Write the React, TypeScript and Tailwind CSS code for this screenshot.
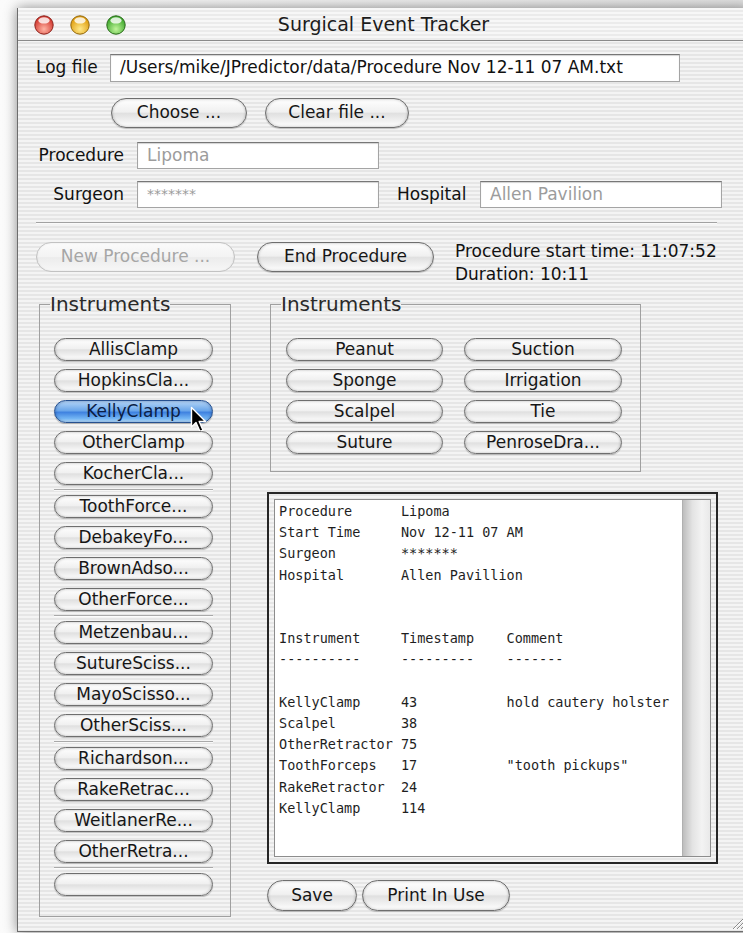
import React from 'react';

type Tone = 'normal' | 'active' | 'disabled';

const sans = "font-['DejaVu_Sans','Liberation_Sans',sans-serif]";
const mono = "font-['DejaVu_Sans_Mono','Liberation_Mono',monospace]";
const stripes =
  'bg-[image:repeating-linear-gradient(to_bottom,#f4f4f4_0px,#f4f4f4_2px,#e6e6e6_2px,#e6e6e6_4px)]';

const skins: Record<Tone, string> = {
  normal:
    'border-[#6e6e6e] text-[#161616] bg-[linear-gradient(to_bottom,#ffffff_0%,#f0f0f0_46%,#e0e0e0_52%,#f2f2f2_80%,#ffffff_100%)] shadow-[inset_0_0_3px_rgba(0,0,0,0.3),0_1px_1px_rgba(0,0,0,0.22)]',
  active:
    'border-[#26508f] text-[#0b1d45] bg-[linear-gradient(to_bottom,#b5d6f7_0%,#6aa6ea_46%,#3f82e0_54%,#74b6f4_84%,#bfe4ff_100%)] shadow-[inset_0_0_3px_rgba(0,30,90,0.45),0_1px_1px_rgba(0,0,0,0.25)]',
  disabled:
    'border-[#c2c2c2] text-[#a6a6a6] bg-[linear-gradient(to_bottom,#fbfbfb_0%,#f3f3f3_50%,#ececec_52%,#f7f7f7_100%)] shadow-[inset_0_0_2px_rgba(0,0,0,0.1)]',
};

function Pill({ label, tone = 'normal', className = '' }: { label: string; tone?: Tone; className?: string }) {
  return (
    <button
      type="button"
      className={`flex items-center justify-center rounded-full border whitespace-nowrap ${skins[tone]} ${className}`}
    >
      {label}
    </button>
  );
}

function Light({ id, base, glow, rim }: { id: string; base: string; glow: string; rim: string }) {
  return (
    <svg width="20" height="20" viewBox="0 0 20 20">
      <defs>
        <radialGradient id={id} cx="50%" cy="72%" r="62%">
          <stop offset="0%" stopColor={glow} />
          <stop offset="100%" stopColor={base} />
        </radialGradient>
      </defs>
      <circle cx="10" cy="10" r="9.2" fill={`url(#${id})`} stroke={rim} strokeWidth="1" />
      <ellipse cx="10" cy="5.4" rx="5.6" ry="3.2" fill="#ffffff" opacity="0.8" />
    </svg>
  );
}

function Field({ value, muted = false, className = '' }: { value: string; muted?: boolean; className?: string }) {
  return (
    <div
      className={`flex items-center bg-white border border-[#a4a4a4] border-t-[#777777] pl-[9px] shadow-[inset_0_1px_1px_rgba(0,0,0,0.18)] whitespace-nowrap overflow-hidden ${
        muted ? 'text-[#9c9c9c]' : 'text-[#111111]'
      } ${className}`}
    >
      {value}
    </div>
  );
}

function Groove() {
  return <div className="my-[4px] h-[2px] border-t border-[#a9a9a9] bg-white/70" />;
}

const clampGroups: string[][] = [
  ['AllisClamp', 'HopkinsCla...', 'KellyClamp', 'OtherClamp', 'KocherCla...'],
  ['ToothForce...', 'DebakeyFo...', 'BrownAdso...', 'OtherForce...'],
  ['Metzenbau...', 'SutureSciss...', 'MayoScisso...', 'OtherSciss...'],
  ['Richardson...', 'RakeRetrac...', 'WeitlanerRe...', 'OtherRetra...'],
  [''],
];

const tableItems = ['Peanut', 'Suction', 'Sponge', 'Irrigation', 'Scalpel', 'Tie', 'Suture', 'PenroseDra...'];

const logText = `Procedure      Lipoma
Start Time     Nov 12-11 07 AM
Surgeon        *******
Hospital       Allen Pavillion


Instrument     Timestamp    Comment
----------     ---------    -------

KellyClamp     43           hold cautery holster
Scalpel        38
OtherRetractor 75
ToothForceps   17           "tooth pickups"
RakeRetractor  24
KellyClamp     114`;

function Cursor() {
  return (
    <svg className="absolute left-[136px] top-[6px]" width="18" height="28" viewBox="0 0 18 28">
      <path
        d="M1.5 1.5 L1.5 21 L6 16.5 L10 25.5 L13 24.2 L9.2 15.4 L15.5 15.4 Z"
        fill="#000000"
        stroke="#ffffff"
        strokeWidth="1.4"
        strokeLinejoin="round"
      />
    </svg>
  );
}

export default function App() {
  return (
    <div
      className={`w-[743px] h-[933px] overflow-hidden bg-[linear-gradient(to_right,#fbfbfb,#e2e2e2)] pl-[17px] pt-[8px] text-[17px] ${sans}`}
    >
      <div
        className={`relative w-[732px] h-[924px] flex flex-col border-l border-b border-[#6d6d6d] shadow-[0_0_12px_rgba(0,0,0,0.45)] ${stripes}`}
      >
        {/* title bar */}
        <div className="h-[33px] shrink-0 grid grid-cols-[1fr_auto_1fr] items-center border-b border-[#8a8a8a] bg-[image:repeating-linear-gradient(to_bottom,#f7f7f7_0px,#f7f7f7_2px,#ebebeb_2px,#ebebeb_4px)]">
          <div className="flex items-center gap-[16px] pl-[16px] pt-[1px]">
            <Light id="close" base="#d2372e" glow="#ffb3a3" rim="#8c231c" />
            <Light id="mini" base="#df9c0c" glow="#ffe98a" rim="#91680f" />
            <Light id="zoom" base="#3ea82c" glow="#c0f59a" rim="#2a6a1b" />
          </div>
          <div className="text-[19px] text-[#1c1c1c] pt-[1px]">Surgical Event Tracker</div>
          <div />
        </div>

        {/* form */}
        <div className="flex flex-col pl-[18px] text-[#111111]">
          <div className="mt-[13px] h-[28px] flex items-center">
            <span className="w-[74px]">Log file</span>
            <Field value="/Users/mike/JPredictor/data/Procedure Nov 12-11 07 AM.txt" className="w-[570px] h-[28px]" />
          </div>

          <div className="mt-[16px] ml-[75px] flex gap-[18px]">
            <Pill label="Choose ..." className="w-[136px] h-[30px]" />
            <Pill label="Clear file ..." className="w-[144px] h-[30px]" />
          </div>

          <div className="mt-[14px] h-[27px] flex items-center">
            <span className="w-[101px] pr-[13px] text-right">Procedure</span>
            <Field value="Lipoma" muted className="w-[242px] h-[27px]" />
          </div>

          <div className="mt-[12px] h-[27px] flex items-center">
            <span className="w-[101px] pr-[13px] text-right">Surgeon</span>
            <Field value="*******" muted className="w-[242px] h-[27px] text-[14px]" />
            <span className="ml-[18px] w-[83px]">Hospital</span>
            <Field value="Allen Pavilion" muted className="w-[242px] h-[27px]" />
          </div>

          <div className="mt-[14px] w-[681px] h-[2px] border-t border-[#a2a2a2] bg-white/80" />

          <div className="mt-[18px] flex items-start">
            <Pill label="New Procedure ..." tone="disabled" className="w-[199px] h-[30px]" />
            <Pill label="End Procedure" className="ml-[22px] w-[177px] h-[30px]" />
            <div className="ml-[21px] -mt-[2px] leading-[23px]">
              <div>Procedure start time: 11:07:52</div>
              <div>Duration: 10:11</div>
            </div>
          </div>

          {/* instrument panels */}
          <div className="mt-[6px] ml-[3px] flex items-start">
            <fieldset className="w-[192px] border border-[#a0a0a0] pl-[14px] pr-[17px] pt-[22px] pb-[20px]">
              <legend className="-ml-[4px] text-[20px] leading-[24px] text-[#2a2a2a]">Instruments</legend>
              {clampGroups.map((group, gi) => (
                <div key={gi}>
                  {gi > 0 && <Groove />}
                  <div className="flex flex-col gap-[8px]">
                    {group.map((name, i) => (
                      <div key={i} className="relative">
                        <Pill label={name} tone={name === 'KellyClamp' ? 'active' : 'normal'} className="w-[159px] h-[23px]" />
                        {name === 'KellyClamp' && <Cursor />}
                      </div>
                    ))}
                  </div>
                </div>
              ))}
            </fieldset>

            <div className="ml-[39px] flex flex-col">
              <fieldset className="w-[371px] border border-[#a0a0a0] pl-[15px] pr-[18px] pt-[22px] pb-[17px]">
                <legend className="-ml-[5px] text-[20px] leading-[24px] text-[#2a2a2a]">Instruments</legend>
                <div className="grid grid-cols-[157px_158px] gap-x-[21px] gap-y-[8px]">
                  {tableItems.map((name) => (
                    <Pill key={name} label={name} className="w-full h-[23px]" />
                  ))}
                </div>
              </fieldset>

              <div className="mt-[20px] -ml-[3px] w-[451px] h-[372px] border-2 border-[#262626] p-[5px]">
                <div className="h-full flex border border-[#8d8d8d] bg-white">
                  <pre className={`flex-1 pl-[4px] pt-[1px] text-[13.5px] leading-[21.2px] text-[#1e1e1e] ${mono}`}>{logText}</pre>
                  <div className="w-[28px] border-l border-[#b0b0b0] bg-[linear-gradient(to_right,#bdbdbd,#e3e3e3_35%,#f3f3f3_70%,#e9e9e9)]" />
                </div>
              </div>

              <div className="mt-[16px] -ml-[3px] flex gap-[5px]">
                <Pill label="Save" className="w-[90px] h-[31px]" />
                <Pill label="Print In Use" className="w-[148px] h-[31px]" />
              </div>
            </div>
          </div>
        </div>

        {/* resize grip */}
        <svg className="absolute right-[5px] bottom-[1px]" width="16" height="16" viewBox="0 0 16 16">
          <path d="M15 5 L5 15 M15 9 L9 15 M15 13 L13 15" stroke="#8c8c8c" strokeWidth="1" />
          <path d="M15 6 L6 15 M15 10 L10 15" stroke="#ffffff" strokeWidth="1" />
        </svg>
      </div>
    </div>
  );
}
